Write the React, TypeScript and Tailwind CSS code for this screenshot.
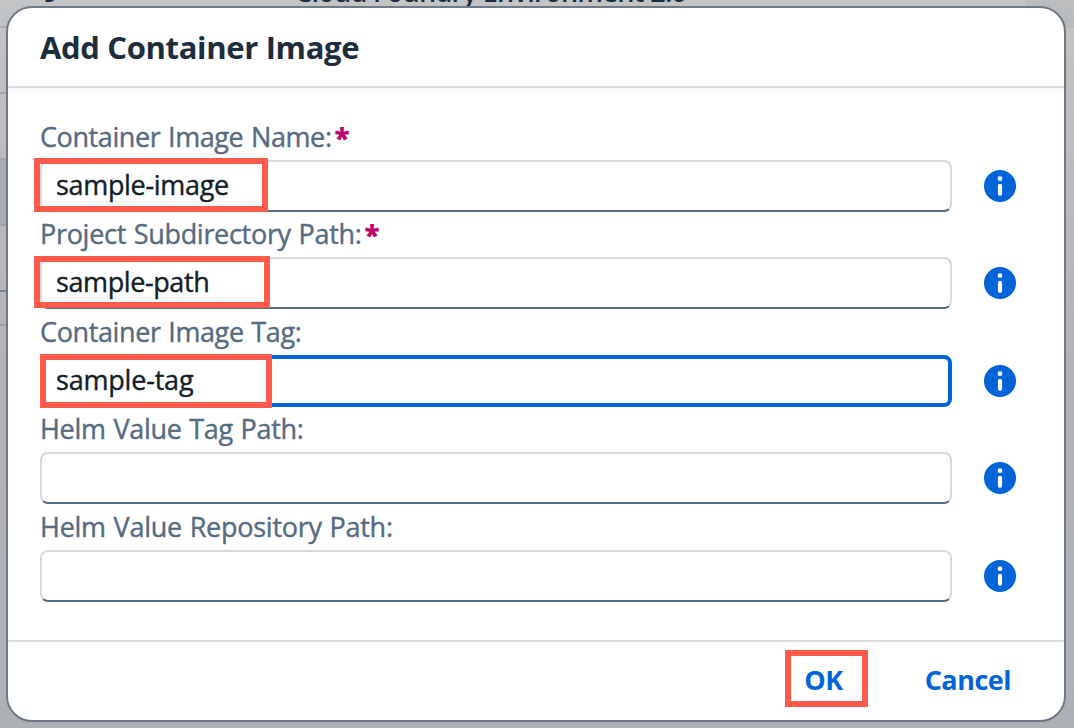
import React from "react";

type Field = { label: string; value: string; required?: boolean; focused?: boolean; labelCls: string; valueCls: string; mark?: string };

const fields: Field[] = [
  { label: "Container Image Name:", value: "sample-image", required: true, labelCls: "tracking-[-0.4px]", valueCls: "tracking-[-0.32px]", mark: "left-[-8px] top-[-4px] h-[54px] w-[234px]" },
  { label: "Project Subdirectory Path:", value: "sample-path", required: true, labelCls: "tracking-[-0.3px]", valueCls: "tracking-[-0.4px]", mark: "left-[-8px] top-[-3px] h-[52px] w-[236px]" },
  { label: "Container Image Tag:", value: "sample-tag", focused: true, labelCls: "tracking-[-0.38px]", valueCls: "tracking-[-0.2px]", mark: "left-[-4px] top-[-5px] h-[54px] w-[232px]" },
  { label: "Helm Value Tag Path:", value: "", labelCls: "tracking-[-0.3px]", valueCls: "" },
  { label: "Helm Value Repository Path:", value: "", labelCls: "tracking-[-0.26px]", valueCls: "" },
];

function InfoIcon() {
  return (
    <svg width="32" height="32" viewBox="0 0 32 32" className="block shrink-0">
      <circle cx="16" cy="16" r="16" fill="#0064d9" />
      <circle cx="16" cy="8.7" r="2.4" fill="#fff" />
      <rect x="13.9" y="13.7" width="4.2" height="12.2" rx="2.1" fill="#fff" />
    </svg>
  );
}

function FieldRow({ f }: { f: Field }) {
  return (
    <div className="flex h-[97.45px] shrink-0 flex-col">
      <div className="flex h-[45.45px] shrink-0 items-start pt-[4.3px] text-[#556b82]">
        <span className={`whitespace-nowrap text-[27px] leading-9 [-webkit-text-stroke:0.4px_#556b82] [word-spacing:1px] ${f.labelCls}`}>{f.label}</span>
        {f.required && (
          <span className="ml-[3px] pt-px text-[28px] font-extrabold leading-9 text-[#ba066c]">*</span>
        )}
      </div>
      <div className="flex items-center gap-8">
        <div className={f.focused
          ? "relative flex h-[52px] w-[912px] items-center rounded-lg border-4 border-[#0064d9] bg-white pl-3"
          : "relative flex h-[52px] w-[912px] items-center rounded-lg border-2 border-[#d5dadd] border-b-[#556b82] bg-white pl-3.5"}>
          <span className={`-mt-0.5 whitespace-nowrap text-[27px] leading-9 text-[#131e29] [-webkit-text-stroke:0.4px_#131e29] ${f.valueCls}`}>{f.value}</span>
          {f.mark && <div className={`absolute border-[6px] border-[#ff5a4c] ${f.mark}`} />}
        </div>
        <InfoIcon />
      </div>
    </div>
  );
}

export default function App() {
  return (
    <div className="relative h-[728px] w-[1074px] overflow-hidden bg-[#b3b5b8] font-['Open_Sans',sans-serif]">
      <div aria-hidden="true" className="absolute inset-0 flex flex-col bg-linear-to-b from-[#c3c4c5] via-[#b2b3b7] via-50% to-[#adb1b5]">
        <div className="relative h-[28px] shrink-0">
          <span className="absolute left-[43px] top-[-26px] text-[27px] font-semibold leading-9 text-[#1d2d3e]">9</span>
          <span className="absolute left-[295px] top-[-26px] whitespace-nowrap text-[27px] font-semibold leading-9 tracking-[-0.68px] text-[#1d2d3e]">Cloud Foundry Environment 2.0</span>
          <div className="absolute right-0 top-0 h-[28px] w-[49px] bg-black/3" />
          <div className="absolute bottom-0 left-0 h-0.5 w-1/2 bg-[#abadaf]" />
        </div>
        <div className="h-[66px] w-1/2 shrink-0 border-b-2 border-[#a3a5a8]" />
        <div className="h-[66px] w-1/2 shrink-0 border-b-2 border-[#a3a5a8]" />
        <div className="h-[66px] w-1/2 shrink-0 border-b-2 border-[#a0a2a6] bg-[#a9acb0]" />
        <div className="h-[66px] w-1/2 shrink-0 border-b-2 border-[#7b858e]" />
        <div className="h-[34px] w-1/2 shrink-0 border-b-2 border-[#a0a2a6]" />
      </div>
      <div className="relative flex h-[728px] flex-col p-1.5">
        <main className="relative flex h-[716px] w-[1060px] flex-col rounded-[26px] border-2 border-[#6f7a86] bg-white">
          <header className="flex h-20 shrink-0 items-center border-b-2 border-[#d9d9d9] pl-8 shadow-[0_4px_6px_rgba(0,0,0,0.04)]">
            <h1 className="whitespace-nowrap text-[31px] font-bold leading-10 tracking-[-0.34px] text-[#1d2d3e]">Add Container Image</h1>
          </header>
          <section className="flex h-[552px] shrink-0 flex-col pl-8 pt-[26.5px]">
            {fields.map((f) => <FieldRow key={f.label} f={f} />)}
          </section>
          <footer className="flex h-20 shrink-0 items-center justify-end border-t-2 border-[#d9d9d9] pb-0.5 text-[27px] font-bold text-[#0064d9]">
            <div className="relative mr-[82px]">
              <button className="tracking-[-0.5px]">OK</button>
              <div className="absolute left-[-19px] top-[-10px] h-[57px] w-[83px] border-[6px] border-[#ff5a4c]" />
            </div>
            <button className="mr-[53px] tracking-[-0.5px]">Cancel</button>
          </footer>
        </main>
      </div>
    </div>
  );
}
